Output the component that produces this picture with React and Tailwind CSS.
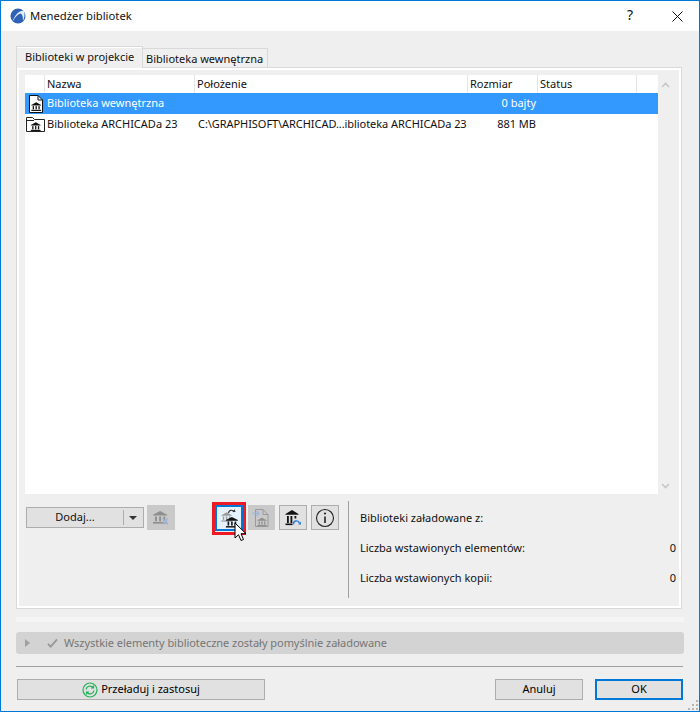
import React from "react";

const columns = "grid grid-cols-[20px_150px_273px_70px_99px_21px]";

// small bank building, drawn in a 16x14 box
const BankShape = ({ color = "#111", transform }) => (
  <g transform={transform} fill={color}>
    <path d="M8 .5 L15.5 4.5 V5.3 H.5 V4.5 Z" />
    <rect x="2.6" y="6.3" width="2" height="5" />
    <rect x="7" y="6.3" width="2" height="5" />
    <rect x="11.4" y="6.3" width="2" height="5" />
    <rect x=".5" y="12" width="15" height="1.8" />
  </g>
);

const FileBank = () => (
  <svg viewBox="0 0 14 18" className="w-[14px] h-[18px]">
    <path d="M.5 .5 H9 L13.5 5 V17.5 H.5 Z" fill="#fff" stroke="#111" />
    <path d="M9 .5 V5 H13.5" fill="none" stroke="#111" />
    <BankShape transform="translate(2 7) scale(.65)" />
  </svg>
);

const FolderBank = () => (
  <svg viewBox="0 0 19 15" className="w-[19px] h-[15px]">
    <path d="M.5 14.5 V.5 H6.5 L8.5 2.5 H18.5 V14.5 Z" fill="#fff" stroke="#222" />
    <path d="M.5 3.5 H8" fill="none" stroke="#222" />
    <BankShape transform="translate(4.5 5) scale(.65)" />
  </svg>
);

const HeaderCell = ({ children }) => (
  <div className="pl-[2px] border-r border-[#e5e5e5] leading-[18px] truncate">{children}</div>
);

const IconButton = ({ children, disabled, className = "" }) => (
  <div className={`w-7 h-[25px] border flex items-center justify-center ${disabled ? "bg-[#c9c9c9] border-[#c9c9c9]" : "bg-[#e1e1e1] border-[#adadad]"} ${className}`}>
    {children}
  </div>
);

const Button = ({ className = "", primary, children }) => (
  <div className={`h-[21px] bg-[#e1e1e1] flex items-center justify-center text-black ${primary ? "border-2 border-[#0078d7]" : "border border-[#adadad]"} ${className}`}>
    {children}
  </div>
);

const StatRow = ({ label, value }) => (
  <div className="flex justify-between h-[30px] items-center">
    <span>{label}</span>
    <span>{value}</span>
  </div>
);

export default function App() {
  return (
    <div className="w-[700px] h-[712px] bg-[#efefef] border border-[#0078d7] flex flex-col overflow-hidden relative text-[11px] text-[#111] font-['Noto_Sans',sans-serif]">
      {/* title bar */}
      <div className="h-[30px] bg-white shrink-0 flex items-center pl-[9px]">
        <svg viewBox="0 0 16 16" className="w-4 h-4 mr-[4px]">
          <circle cx="8" cy="8" r="7.5" fill="#2f62b5" />
          <path d="M2 15 C5 6 10 2 14 3 C15 6 14.5 10 13 13 C13 8 12 6 10.5 5.5 C7 6 4 11 2 15 Z" fill="#e4ecf7" />
        </svg>
        <span className="text-[11.25px]">Menedżer bibliotek</span>
        <span className="ml-auto text-[14px] mr-[39px] -mt-[3px]">?</span>
        <svg viewBox="0 0 11 11" className="w-[11px] h-[11px] mr-[16px]" stroke="#111" fill="none">
          <path d="M.5 .5 L10.5 10.5 M10.5 .5 L.5 10.5" />
        </svg>
      </div>

      {/* tabs */}
      <div className="flex items-end pl-[15px] h-[36px] shrink-0 relative z-10">
        <div className="w-[127px] h-[22px] -mb-px bg-[#efefef] border border-b-0 border-[#d9d9d9] pl-[8px] leading-[20px] shadow-[inset_0_1px_0_#fff] whitespace-nowrap">
          Biblioteki w projekcie
        </div>
        <div className="h-[19px] w-[125px] bg-[#f0f0f0] border border-l-0 border-b-0 border-[#d9d9d9] pl-[3px] leading-[20px] whitespace-nowrap">
          Biblioteka wewnętrzna
        </div>
      </div>

      {/* panel */}
      <div className="mx-[15px] w-[666px] h-[542px] shrink-0 border border-[#d9d9d9]">
        <div className="h-full border-2 border-white pt-[5px] pl-[6px] flex flex-col">
          <div className="flex h-[419px] shrink-0">
            <div className="w-[633px] bg-white flex flex-col">
              <div className={`${columns} h-[18px] text-[#111]`}>
                <HeaderCell />
                <HeaderCell>Nazwa</HeaderCell>
                <HeaderCell>Położenie</HeaderCell>
                <HeaderCell>Rozmiar</HeaderCell>
                <HeaderCell>Status</HeaderCell>
                <div />
              </div>
              <div className={`${columns} h-[21px] bg-[#3399ff] text-white items-center`}>
                <div className="pl-[4px]"><FileBank /></div>
                <div className="pl-[2px]">Biblioteka wewnętrzna</div>
                <div />
                <div className="text-right pr-[2px]">0 bajty</div>
              </div>
              <div className={`${columns} h-[21px] items-center`}>
                <div className="pl-[1px]"><FolderBank /></div>
                <div className="pl-[2px] whitespace-nowrap">Biblioteka ARCHICADa 23</div>
                <div className="pl-[3px] whitespace-nowrap overflow-hidden tracking-[-0.06px]">C:\GRAPHISOFT\ARCHICAD...iblioteka ARCHICADa 23</div>
                <div className="text-right pr-[2px]">881 MB</div>
              </div>
            </div>
            <div className="w-[15px] flex flex-col items-center justify-between py-[7px] pb-[5px]">
              <svg viewBox="0 0 9 6" className="w-[9px] h-[6px]" fill="none" stroke="#c6c6c6" strokeWidth="1.6"><path d="M1 5 L4.5 1.5 L8 5" /></svg>
              <svg viewBox="0 0 9 6" className="w-[9px] h-[6px]" fill="none" stroke="#c6c6c6" strokeWidth="1.6"><path d="M1 1 L4.5 4.5 L8 1" /></svg>
            </div>
          </div>

          {/* lower controls */}
          <div className="flex h-[97px] mt-[7px]">
            <div className="w-[324px] h-full border-r border-[#a0a0a0] pl-px pt-[4px] flex items-start">
              <div className="w-[118px] h-[21px] mt-[2px] bg-[#e1e1e1] border border-[#adadad] flex items-center">
                <span className="w-[96px] text-center">Dodaj...</span>
                <span className="h-[15px] border-l border-[#adadad]" />
                <span className="ml-[5px] border-x-[4px] border-x-transparent border-t-[4px] border-t-[#333]" />
              </div>
              <div className="ml-[3px]">
                <IconButton disabled>
                  <svg viewBox="0 0 20 16" className="w-5 h-4">
                    <BankShape color="#8f8f8f" transform="translate(1.5 .5) scale(.95)" />
                    <path d="M11.5 8.5 L17 14.5 M17 8.5 L11.5 14.5" stroke="#9fb6d6" strokeWidth="1.5" />
                  </svg>
                </IconButton>
              </div>
              <div className="ml-[40px] relative">
                <div className="absolute -inset-[3px] -bottom-[4px] border-[3px] border-[#ed1c24] pointer-events-none" />
                <div className="w-7 h-[26px] bg-[#e5f1fb] border-2 border-[#0078d7] flex items-center justify-center">
                  <svg viewBox="0 0 20 22" className="w-5 h-[22px]">
                    <BankShape color="#9a9a9a" transform="translate(2 5) scale(.7)" />
                    <path d="M9.5 6 C10 2.5 14 2.5 15 5" fill="none" stroke="#333" strokeWidth="1.2" />
                    <path d="M13.3 5 H16.5 L15.7 2.2 Z" fill="#333" />
                    <BankShape transform="translate(6.5 9.5) scale(.8)" />
                  </svg>
                </div>
              </div>
              <div className="ml-[5px]">
                <IconButton disabled className="w-[27px]">
                  <svg viewBox="0 0 20 20" className="w-5 h-5">
                    <path d="M3.5 1.5 H11 L16 6.5 V18.5 H3.5 Z" fill="none" stroke="#9a9a9a" />
                    <path d="M11 1.5 V6.5 H16" fill="none" stroke="#9a9a9a" />
                    <path d="M.5 5.5 H7 M4.5 3 L7 5.5 L4.5 8" fill="none" stroke="#9db8df" strokeWidth="1.3" />
                    <BankShape color="#8f8f8f" transform="translate(5 9.5) scale(.62)" />
                  </svg>
                </IconButton>
              </div>
              <div className="ml-[4px]">
                <IconButton>
                  <svg viewBox="0 0 20 18" className="w-5 h-[18px]">
                    <path d="M9 1 L15.5 5 V5.8 H2.5 V5 Z" fill="#111" />
                    <g fill="#111">
                      <rect x="4" y="7" width="1.8" height="7" />
                      <rect x="7.5" y="7" width="1.8" height="7" />
                      <rect x="11.5" y="7" width="1.8" height="2.5" />
                      <rect x="2.5" y="14.5" width="7" height="1.6" />
                    </g>
                    <path d="M10.5 15.5 A3 3 0 0 1 16.3 14" fill="none" stroke="#2f7fd8" strokeWidth="1.4" />
                    <path d="M15 15.5 H18 V12.5 Z" fill="#2f7fd8" />
                  </svg>
                </IconButton>
              </div>
              <div className="ml-[4px]">
                <IconButton>
                  <svg viewBox="0 0 20 20" className="w-5 h-5" fill="none" stroke="#222">
                    <circle cx="10" cy="10" r="8.5" strokeWidth="1.1" />
                    <path d="M10 8.5 V15" strokeWidth="1.6" />
                    <circle cx="10" cy="5.5" r="1.1" fill="#222" stroke="none" />
                  </svg>
                </IconButton>
              </div>
            </div>
            <div className="w-[327px] pl-[11px] pt-[2px]">
              <StatRow label="Biblioteki załadowane z:" />
              <StatRow label="Liczba wstawionych elementów:" value="0" />
              <StatRow label="Liczba wstawionych kopii:" value="0" />
            </div>
          </div>
        </div>
      </div>

      {/* status strip */}
      <div className="mx-[15px] w-[668px] h-[5px] mt-[8px] bg-[#f5f5f5] shrink-0" />
      <div className="mx-[15px] w-[668px] h-[22px] mt-[10px] bg-[#d3d3d3] rounded-[3px] flex items-center text-[#767676] shrink-0">
        <span className="ml-[9px] border-y-[4px] border-y-transparent border-l-[5px] border-l-[#a0a0a0]" />
        <svg viewBox="0 0 12 10" className="w-[11px] h-[10px] ml-[17px]" fill="none" stroke="#989898" strokeWidth="2">
          <path d="M1 6 L4 9 L11 1" />
        </svg>
        <span className="ml-[6px] tracking-[-0.04px]">Wszystkie elementy biblioteczne zostały pomyślnie załadowane</span>
      </div>
      <div className="mx-[15px] w-[667px] h-px mt-[12px] bg-[#a0a0a0] shrink-0" />

      {/* footer buttons */}
      <div className="flex items-center mx-[16px] mt-[12px] shrink-0">
        <Button className="w-[248px] gap-[3px]">
          <svg viewBox="0 0 16 16" className="w-4 h-4" fill="none" stroke="#1fb257" strokeWidth="1.2">
            <circle cx="8" cy="8" r="7" />
            <path d="M4 7.5 A4 4 0 0 1 11 5.5 M11.5 3.5 V6 H9 M12 8.5 A4 4 0 0 1 5 10.5 M4.5 12.5 V10 H7" />
          </svg>
          Przeładuj i zastosuj
        </Button>
        <Button className="w-[88px] ml-[230px]">Anuluj</Button>
        <Button primary className="w-[88px] ml-[12px]">OK</Button>
      </div>

      {/* resize grip */}
      <svg viewBox="0 0 11 11" className="absolute right-0 bottom-0 w-[11px] h-[11px]" fill="#b5b5b5">
        <rect x="8" y="0" width="2" height="2" />
        <rect x="4" y="4" width="2" height="2" />
        <rect x="8" y="4" width="2" height="2" />
        <rect x="0" y="8" width="2" height="2" />
        <rect x="4" y="8" width="2" height="2" />
        <rect x="8" y="8" width="2" height="2" />
      </svg>

      {/* mouse cursor */}
      <svg viewBox="0 0 13 20" className="absolute left-[233px] top-[521px] w-[13px] h-5 z-20">
        <path d="M1 1 V16 L4.5 12.7 L7 18.5 L9.5 17.5 L7 11.7 L12 11.7 Z" fill="#fff" stroke="#000" />
      </svg>
    </div>
  );
}
